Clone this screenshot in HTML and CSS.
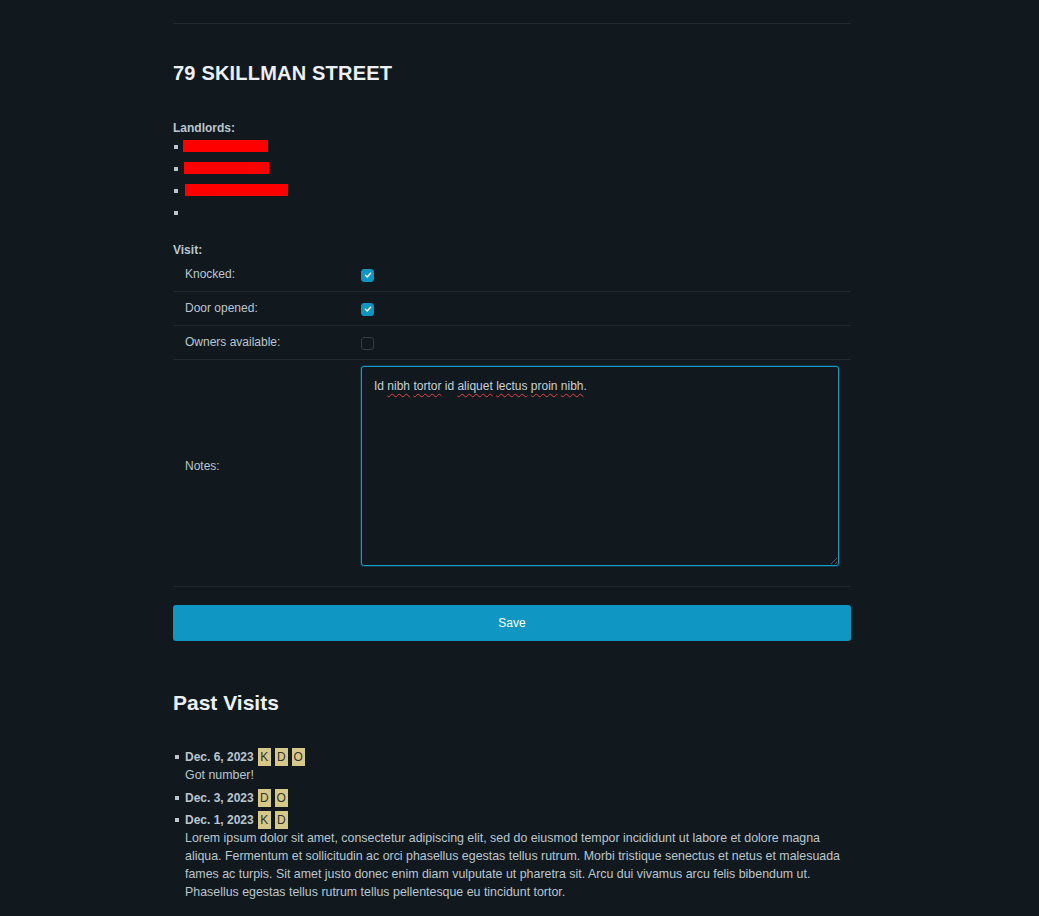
FILE: index.html
```html
<!DOCTYPE html>
<html lang="en">
<head>
<meta charset="utf-8">
<title>79 Skillman Street</title>
<link rel="stylesheet" href="styles.css">
</head>
<body>
<main class="container">
  <hr class="top-rule">
  <h2 class="address">79 SKILLMAN STREET</h2>

  <section class="landlords">
    <div class="label">Landlords:</div>
    <ul class="sq-list">
      <li><span class="redact" style="width:85px"></span></li>
      <li><span class="redact redact-2" style="width:85px"></span></li>
      <li><span class="redact redact-3" style="width:103px"></span></li>
      <li></li>
    </ul>
  </section>

  <section class="visit">
    <div class="label">Visit:</div>
    <table class="visit-table">
      <tr>
        <td class="lbl">Knocked:</td>
        <td><span class="check on"><svg viewBox="0 0 12 12" width="12" height="12"><path d="M3.4 6.3 L5.2 7.9 L8.6 4.3" fill="none" stroke="#fff" stroke-width="1.4" stroke-linecap="round" stroke-linejoin="round"/></svg></span></td>
      </tr>
      <tr>
        <td class="lbl">Door opened:</td>
        <td><span class="check on"><svg viewBox="0 0 12 12" width="12" height="12"><path d="M3.4 6.3 L5.2 7.9 L8.6 4.3" fill="none" stroke="#fff" stroke-width="1.4" stroke-linecap="round" stroke-linejoin="round"/></svg></span></td>
      </tr>
      <tr>
        <td class="lbl">Owners available:</td>
        <td><span class="check"></span></td>
      </tr>
      <tr class="notes-row">
        <td class="lbl">Notes:</td>
        <td>
          <div class="textarea" role="textbox" aria-multiline="true">Id <span class="sp">nibh</span> <span class="sp">tortor</span> id <span class="sp">aliquet</span> <span class="sp">lectus</span> <span class="sp">proin</span> <span class="sp">nibh</span>.<span class="grip"></span></div>
        </td>
      </tr>
    </table>
  </section>

  <button class="save" type="button">Save</button>

  <h3 class="past-title">Past Visits</h3>
  <ul class="sq-list visits">
    <li>
      <div class="vhead"><strong>Dec. 6, 2023</strong><span class="tags"><span class="tag">K</span><span class="tag">D</span><span class="tag">O</span></span></div>
      <div class="vnote">Got number!</div>
    </li>
    <li>
      <div class="vhead"><strong>Dec. 3, 2023</strong><span class="tags"><span class="tag">D</span><span class="tag">O</span></span></div>
    </li>
    <li>
      <div class="vhead"><strong>Dec. 1, 2023</strong><span class="tags"><span class="tag">K</span><span class="tag">D</span></span></div>
      <div class="vnote">Lorem ipsum dolor sit amet, consectetur adipiscing elit, sed do eiusmod tempor incididunt ut labore et dolore magna aliqua. Fermentum et sollicitudin ac orci phasellus egestas tellus rutrum. Morbi tristique senectus et netus et malesuada fames ac turpis. Sit amet justo donec enim diam vulputate ut pharetra sit. Arcu dui vivamus arcu felis bibendum ut. Phasellus egestas tellus rutrum tellus pellentesque eu tincidunt tortor.</div>
    </li>
  </ul>
</main>
</body>
</html>
```

FILE: styles.css
```css
html, body {
  margin: 0;
  padding: 0;
  background: #11191f;
}

body {
  font-family: "Liberation Sans", "DejaVu Sans", sans-serif;
  font-size: 12px;
  line-height: 18px;
  color: #bbc6ce;
  padding-right: 15px;
}

.container {
  width: 678px;
  margin: 0 auto;
  padding: 23px 0 40px;
}

.top-rule {
  border: 0;
  border-top: 1px solid #1f2a33;
  margin: 0;
}

.address {
  margin: 37px 0 0;
  font-size: 20px;
  line-height: 24px;
  font-weight: 700;
  color: #edf0f3;
  letter-spacing: 0.2px;
}

.label {
  font-weight: 700;
  color: #bbc6ce;
}

.landlords {
  margin-top: 34px;
}

.sq-list {
  list-style: none;
  margin: 0;
  padding: 0;
}

.sq-list > li {
  position: relative;
  padding-left: 10px;
}

.sq-list > li::before {
  content: "";
  position: absolute;
  left: 1px;
  top: 8px;
  width: 4px;
  height: 4px;
  background: #bbc6ce;
}

.landlords .sq-list > li {
  height: 22px;
}

.redact {
  display: inline-block;
  height: 12px;
  background: #ff0000;
  vertical-align: top;
  margin-top: 3px;
}
.redact-2 { margin-left: 1px; }
.redact-3 { margin-left: 2px; }

.visit {
  margin-top: 16px;
}

.visit-table {
  width: 100%;
  border-collapse: collapse;
  margin-top: -1px;
}

.visit-table td {
  padding: 7px 12px 8px;
  border-bottom: 1px solid #1f2a33;
  vertical-align: middle;
}

.visit-table td.lbl {
  width: 152px;
}

.check {
  display: block;
  width: 11px;
  height: 11px;
  border: 1px solid #2d3c47;
  border-radius: 3px;
  margin-top: 2px;
}

.check.on {
  background: #1095c1;
  border-color: #1095c1;
}

.check svg { display: block; margin: -0.5px 0 0 -0.5px; }

.notes-row td {
  padding-top: 6px;
  padding-bottom: 20px;
}

.textarea {
  position: relative;
  box-sizing: border-box;
  height: 200px;
  border: 1px solid #1a9bc6;
  border-radius: 3px;
  box-shadow: 0 0 0 1px rgba(16, 149, 193, 0.25);
  padding: 10px 12px 9px;
  color: #c7d0d7;
  background: #11191f;
}

.sp {
  text-decoration: underline wavy #e0454a;
  text-decoration-thickness: 1px;
  text-underline-offset: 3px;
}

.grip {
  position: absolute;
  right: 1px;
  bottom: 1px;
  width: 9px;
  height: 9px;
  background: repeating-linear-gradient(135deg, transparent 0 2px, #4b5a65 2px 3px);
  clip-path: polygon(100% 0, 100% 100%, 0 100%);
}

.save {
  display: block;
  width: 100%;
  height: 36px;
  margin-top: 18px;
  border: 0;
  border-radius: 3px;
  background: #0f96c2;
  color: #fff;
  font-family: inherit;
  font-size: 12px;
}

.past-title {
  margin: 50px 0 0;
  font-size: 21px;
  line-height: 24px;
  font-weight: 700;
  color: #edf0f3;
}

.visits {
  margin-top: 33px;
}

.visits > li {
  margin-bottom: 4px;
  padding-left: 12px;
}

.visits > li:first-child {
  margin-bottom: 5px;
}

.visits > li::before {
  top: 7px;
  left: 2px;
}

.vhead {
  display: flex;
  align-items: center;
  gap: 3px;
  height: 18px;
}

.vhead strong {
  color: #bbc6ce;
  margin-right: 1px;
}

.tags {
  display: flex;
  gap: 4px;
}

.tag {
  display: inline-block;
  width: 13px;
  height: 18px;
  line-height: 18px;
  text-align: center;
  background: #d6c889;
  color: #333;
}

.vnote {
  font-size: 12.4px;
  padding-right: 6px;
}
```
